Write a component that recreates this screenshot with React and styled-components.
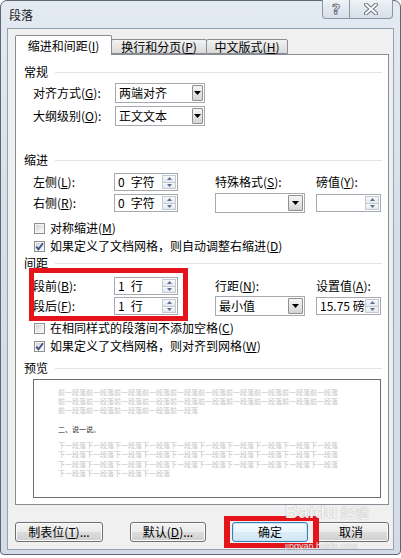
import React from 'react';
import styled, { createGlobalStyle } from 'styled-components';

const Global = createGlobalStyle`
  html, body { margin: 0; padding: 0; background: #ffffff; }
  body {
    font-family: "Noto Sans CJK SC", "Liberation Sans", sans-serif;
    font-size: 12px;
    color: #000;
  }
  * { box-sizing: border-box; }
`;

const Window = styled.div`
  position: relative;
  width: 401px;
  height: 555px;
  display: flex;
  flex-direction: column;
  padding: 0 6px 4px 6px;
  border: 1px solid #5d6673;
  border-radius: 7px 7px 4px 4px;
  background: linear-gradient(#e3eaf2, #d6dfe9 40%, #d3dce7);
`;

const TitleBar = styled.div`
  height: 27px;
  display: flex;
  align-items: center;
  flex: none;
`;

const Title = styled.div`
  margin-left: 2px;
  font-size: 12px;
  line-height: 14px;
  color: #1a1a1a;
`;

const CapBtns = styled.div`
  display: flex;
  margin-left: auto;
  margin-right: 1px;
  align-self: flex-start;
  margin-top: -1px;
`;

const CapBtn = styled.div`
  width: ${p => p.$w}px;
  height: 19px;
  display: flex;
  align-items: center;
  justify-content: center;
  border: 1px solid #8a96a6;
  border-top: none;
  border-radius: ${p => p.$r};
  background: linear-gradient(#f0f3f7, #e2e8ef 50%, #d8dfe8);
  & + & { border-left: none; }
`;

const HelpGlyph = styled.span`
  font-family: "DejaVu Sans", sans-serif;
  font-size: 14px;
  font-weight: bold;
  line-height: 14px;
  color: #fbfcfd;
  -webkit-text-stroke: 1px #6a7686;
`;

const Content = styled.div`
  flex: 1;
  display: flex;
  flex-direction: column;
  background: #f0f0f0;
  border: 1px solid #96a2b0;
  padding: 6px 0 0 7px;
`;

const TabRow = styled.div`
  height: 19px;
  display: flex;
  align-items: flex-end;
  flex: none;
`;

const Tab = styled.div`
  width: ${p => p.$w}px;
  height: ${p => (p.$active ? 20 : 15)}px;
  margin-bottom: ${p => (p.$active ? -1 : 0)}px;
  margin-left: ${p => (p.$first ? 0 : -1)}px;
  position: relative;
  z-index: ${p => (p.$active ? 2 : 1)};
  display: flex;
  align-items: center;
  justify-content: center;
  border: 1px solid #898c95;
  border-bottom: ${p => (p.$active ? 'none' : '1px solid #898c95')};
  border-radius: 2px 2px 0 0;
  background: ${p => (p.$active ? '#ffffff' : 'linear-gradient(#f3f3f3, #e6e6e6 50%, #d9d9d9)')};
  line-height: 14px;
  white-space: nowrap;
`;

const Panel = styled.div`
  width: 374px;
  height: 451px;
  flex: none;
  background: #ffffff;
  border: 1px solid #898c95;
  padding: 10px 6px 0 8px;
  display: flex;
  flex-direction: column;
`;

const SectionHead = styled.div`
  display: flex;
  align-items: center;
  height: 14px;
  line-height: 14px;
  margin-top: ${p => p.$mt}px;
  &::after {
    content: '';
    flex: 1;
    height: 1px;
    background: #dde3ea;
    margin-left: 7px;
  }
`;

const FormGrid = styled.div`
  margin-top: ${p => p.$mt}px;
  margin-left: 9px;
  display: grid;
  grid-template-columns: ${p => p.$cols};
  grid-auto-rows: 20px;
  row-gap: ${p => p.$gap}px;
  align-items: center;
`;

const Label = styled.div`
  line-height: 14px;
  white-space: nowrap;
`;

const Acc = styled.span`
  text-decoration: underline;
  text-underline-offset: 1px;
`;

const SelectBox = styled.div`
  width: ${p => p.$w}px;
  height: 20px;
  display: flex;
  border: 1px solid #a5a9b1;
  background: #ffffff;
`;

const SelectText = styled.div`
  flex: 1;
  padding-left: 3px;
  line-height: 18px;
  white-space: nowrap;
  overflow: hidden;
`;

const DropBtn = styled.div`
  width: ${p => p.$bw}px;
  margin: 1px;
  border: 1px solid #8f8f8f;
  border-radius: 1px;
  background: linear-gradient(#f5f5f5, #e6e6e6 50%, #d4d4d4);
  display: flex;
  align-items: center;
  justify-content: center;
`;

const SpinBox = styled.div`
  width: ${p => p.$w}px;
  height: 18px;
  display: flex;
  border: 1px solid #a5a9b1;
  background: #ffffff;
`;

const SpinText = styled.div`
  flex: 1;
  min-width: 0;
  padding-left: 3px;
  line-height: 16px;
  white-space: nowrap;
  overflow: hidden;
`;

const SpinBtns = styled.div`
  width: 14px;
  margin: 1px 1px 1px 0;
  display: flex;
  flex-direction: column;
`;

const SpinHalf = styled.div`
  flex: 1;
  display: flex;
  align-items: center;
  justify-content: center;
  border: 1px solid #c4cad2;
  background: linear-gradient(#f8f9fb, #e4e8ed);
  & + & { border-top: none; }
`;

const CheckRow = styled.div`
  margin-top: ${p => p.$mt || 0}px;
  margin-left: 10px;
  height: 18px;
  display: flex;
  align-items: center;
  gap: 5px;
  line-height: 14px;
  white-space: nowrap;
`;

const Box = styled.span`
  width: 11px;
  height: 11px;
  flex: none;
  display: flex;
  align-items: center;
  justify-content: center;
  border: 1px solid #8e8f8f;
  background: linear-gradient(135deg, #c9ccd1, #eceef0 60%, #f7f7f7);
  box-shadow: inset 0 0 0 1px #f4f4f4;
`;

const PreviewBox = styled.div`
  margin-top: 4px;
  margin-left: 9px;
  width: 348px;
  height: 119px;
  border: 1px solid #6d6d6d;
  background: #ffffff;
  padding: 8px 0 0 24px;
  display: flex;
  flex-direction: column;
`;

const PreviewLines = styled.div`
  margin-top: ${p => p.$mt || 0}px;
  font-size: 7px;
  line-height: ${p => p.$lh}px;
  color: ${p => p.$c};
  white-space: nowrap;
`;

const ButtonRow = styled.div`
  margin-top: 17px;
  display: flex;
`;

const Button = styled.div`
  width: ${p => p.$w}px;
  height: 20px;
  margin-left: ${p => p.$ml || 0}px;
  display: flex;
  align-items: center;
  justify-content: center;
  border: 1px solid ${p => (p.$focus ? '#3c7fb1' : '#707070')};
  border-radius: 3px;
  background: ${p =>
    p.$focus
      ? 'linear-gradient(#f6fbfe, #eaf5fc 50%, #dcedf8 51%, #d0e6f5)'
      : 'linear-gradient(#f2f2f2, #ebebeb 50%, #dddddd 51%, #cfcfcf)'};
  box-shadow: inset 0 0 0 1px ${p => (p.$focus ? '#c6e6f8' : '#fbfbfb')};
  line-height: 14px;
  white-space: nowrap;
`;

const RedFrame = styled.div`
  position: absolute;
  left: ${p => p.$x}px;
  top: ${p => p.$y}px;
  width: ${p => p.$w}px;
  height: ${p => p.$h}px;
  border: 5px solid #e4141a;
  border-left-width: ${p => p.$side}px;
  border-right-width: ${p => p.$side}px;
  pointer-events: none;
`;

const Watermark = styled.div`
  position: absolute;
  left: 284px;
  top: 501px;
  display: flex;
  flex-direction: column;
  align-items: flex-start;
  color: rgba(255, 255, 255, 0.9);
  text-shadow: 0 0 1px rgba(90, 90, 90, 0.6);
  pointer-events: none;
`;

const WmBig = styled.div`
  font-family: "Liberation Sans", sans-serif;
  font-weight: bold;
  font-size: 18px;
  line-height: 20px;
  letter-spacing: 0.5px;
`;

const WmCn = styled.span`
  font-family: "Noto Sans CJK SC", sans-serif;
  font-size: 14px;
  font-weight: normal;
  margin-left: 3px;
`;

const WmSmall = styled.div`
  font-family: "Liberation Sans", sans-serif;
  font-size: 9px;
  line-height: 10px;
  margin-top: 19px;
`;

const Tri = ({ up, color, w = 5, h = 3 }) => (
  <svg width={w} height={h} viewBox={`0 0 ${w} ${h}`}>
    <polygon
      points={up ? `0,${h} ${w},${h} ${w / 2},0` : `0,0 ${w},0 ${w / 2},${h}`}
      fill={color}
    />
  </svg>
);

const Select = ({ w, bw = 13, children }) => (
  <SelectBox $w={w}>
    <SelectText>{children}</SelectText>
    <DropBtn $bw={bw}>
      <Tri color="#000" w={7} h={4} />
    </DropBtn>
  </SelectBox>
);

const Spinner = ({ w, children }) => (
  <SpinBox $w={w}>
    <SpinText>{children}</SpinText>
    <SpinBtns>
      <SpinHalf><Tri up color="#5b6f93" /></SpinHalf>
      <SpinHalf><Tri color="#5b6f93" /></SpinHalf>
    </SpinBtns>
  </SpinBox>
);

const Check = ({ checked, mt, children }) => (
  <CheckRow $mt={mt}>
    <Box>
      {checked && (
        <svg width="9" height="9" viewBox="0 0 9 9">
          <path d="M1.2 4.6 L3.4 7.2 L8 1.2" fill="none" stroke="#3a4d86" strokeWidth="1.8" />
        </svg>
      )}
    </Box>
    <span>{children}</span>
  </CheckRow>
);

const A = ({ k }) => (
  <>(<Acc>{k}</Acc>)</>
);

const prev = '前一段落';
const next = '下一段落';
const SP = '\u2002';

export default function App() {
  return (
    <>
      <Global />
      <Window>
        <TitleBar>
          <Title>段落</Title>
          <CapBtns>
            <CapBtn $w={28} $r="0 0 0 4px">
              <HelpGlyph>?</HelpGlyph>
            </CapBtn>
            <CapBtn $w={43} $r="0 0 4px 0">
              <svg width="16" height="12" viewBox="0 0 16 12">
                <path d="M3 1.5 L13 10.5 M13 1.5 L3 10.5" stroke="#6a7686" strokeWidth="4" strokeLinecap="round" />
                <path d="M3 1.5 L13 10.5 M13 1.5 L3 10.5" stroke="#fbfcfd" strokeWidth="2" strokeLinecap="round" />
              </svg>
            </CapBtn>
          </CapBtns>
        </TitleBar>

        <Content>
          <TabRow>
            <Tab $w={97} $active $first>缩进和间距<A k="I" /></Tab>
            <Tab $w={96}>换行和分页<A k="P" /></Tab>
            <Tab $w={82}>中文版式<A k="H" /></Tab>
          </TabRow>

          <Panel>
            <SectionHead $mt={0}>常规</SectionHead>
            <FormGrid $mt={4} $gap={3} $cols="82px 90px">
              <Label>对齐方式<A k="G" />:</Label>
              <Select w={90} bw={11}>两端对齐</Select>
              <Label>大纲级别<A k="O" />:</Label>
              <Select w={90} bw={11}>正文文本</Select>
            </FormGrid>

            <SectionHead $mt={27}>缩进</SectionHead>
            <FormGrid $mt={5} $gap={1} $cols="81px 101px 101px 65px">
              <Label>左侧<A k="L" />:</Label>
              <Spinner w={64}>{`0${SP}字符`}</Spinner>
              <Label>特殊格式<A k="S" />:</Label>
              <Label>磅值<A k="Y" />:</Label>
              <Label>右侧<A k="R" />:</Label>
              <Spinner w={64}>{`0${SP}字符`}</Spinner>
              <Select w={90} bw={15}></Select>
              <Spinner w={65}></Spinner>
            </FormGrid>
            <Check mt={6}>对称缩进<A k="M" /></Check>
            <Check checked>如果定义了文档网格，则自动调整右缩进<A k="D" /></Check>

            <SectionHead $mt={1}>间距</SectionHead>
            <FormGrid $mt={6} $gap={0} $cols="81px 101px 101px 65px">
              <Label>段前<A k="B" />:</Label>
              <Spinner w={64}>{`1${SP}行`}</Spinner>
              <Label>行距<A k="N" />:</Label>
              <Label>设置值<A k="A" />:</Label>
              <Label>段后<A k="F" />:</Label>
              <Spinner w={64}>{`1${SP}行`}</Spinner>
              <Select w={90} bw={15}>最小值</Select>
              <Spinner w={65}>15.75 磅</Spinner>
            </FormGrid>
            <Check mt={3}>在相同样式的段落间不添加空格<A k="C" /></Check>
            <Check checked>如果定义了文档网格，则对齐到网格<A k="W" /></Check>

            <SectionHead $mt={6}>预览</SectionHead>
            <PreviewBox>
              <PreviewLines $lh={9} $c="#c4c4c4">
                <div>{prev.repeat(10)}</div>
                <div>{prev.repeat(10)}</div>
                <div>{prev.repeat(5)}</div>
              </PreviewLines>
              <PreviewLines $mt={10} $lh={9} $c="#222">
                <div>二、说一说。</div>
              </PreviewLines>
              <PreviewLines $mt={7} $lh={9.4} $c="#c4c4c4">
                <div>{next.repeat(10)}</div>
                <div>{next.repeat(10)}</div>
                <div>{next.repeat(10)}</div>
                <div>{next.repeat(4)}</div>
              </PreviewLines>
            </PreviewBox>
          </Panel>

          <ButtonRow>
            <Button $w={88}>制表位<A k="T" />...</Button>
            <Button $w={76} $ml={27}>默认<A k="D" />...</Button>
            <Button $w={76} $ml={26} $focus>确定</Button>
            <Button $w={76} $ml={5}>取消</Button>
          </ButtonRow>
        </Content>

        <RedFrame $x={28} $y={267} $w={159} $h={53} $side={5} />
        <RedFrame $x={223} $y={515} $w={95} $h={32} $side={6} />
        <Watermark>
          <WmBig>Baidu<WmCn>经验</WmCn></WmBig>
          <WmSmall>jingyan.baidu.com</WmSmall>
        </Watermark>
      </Window>
    </>
  );
}
